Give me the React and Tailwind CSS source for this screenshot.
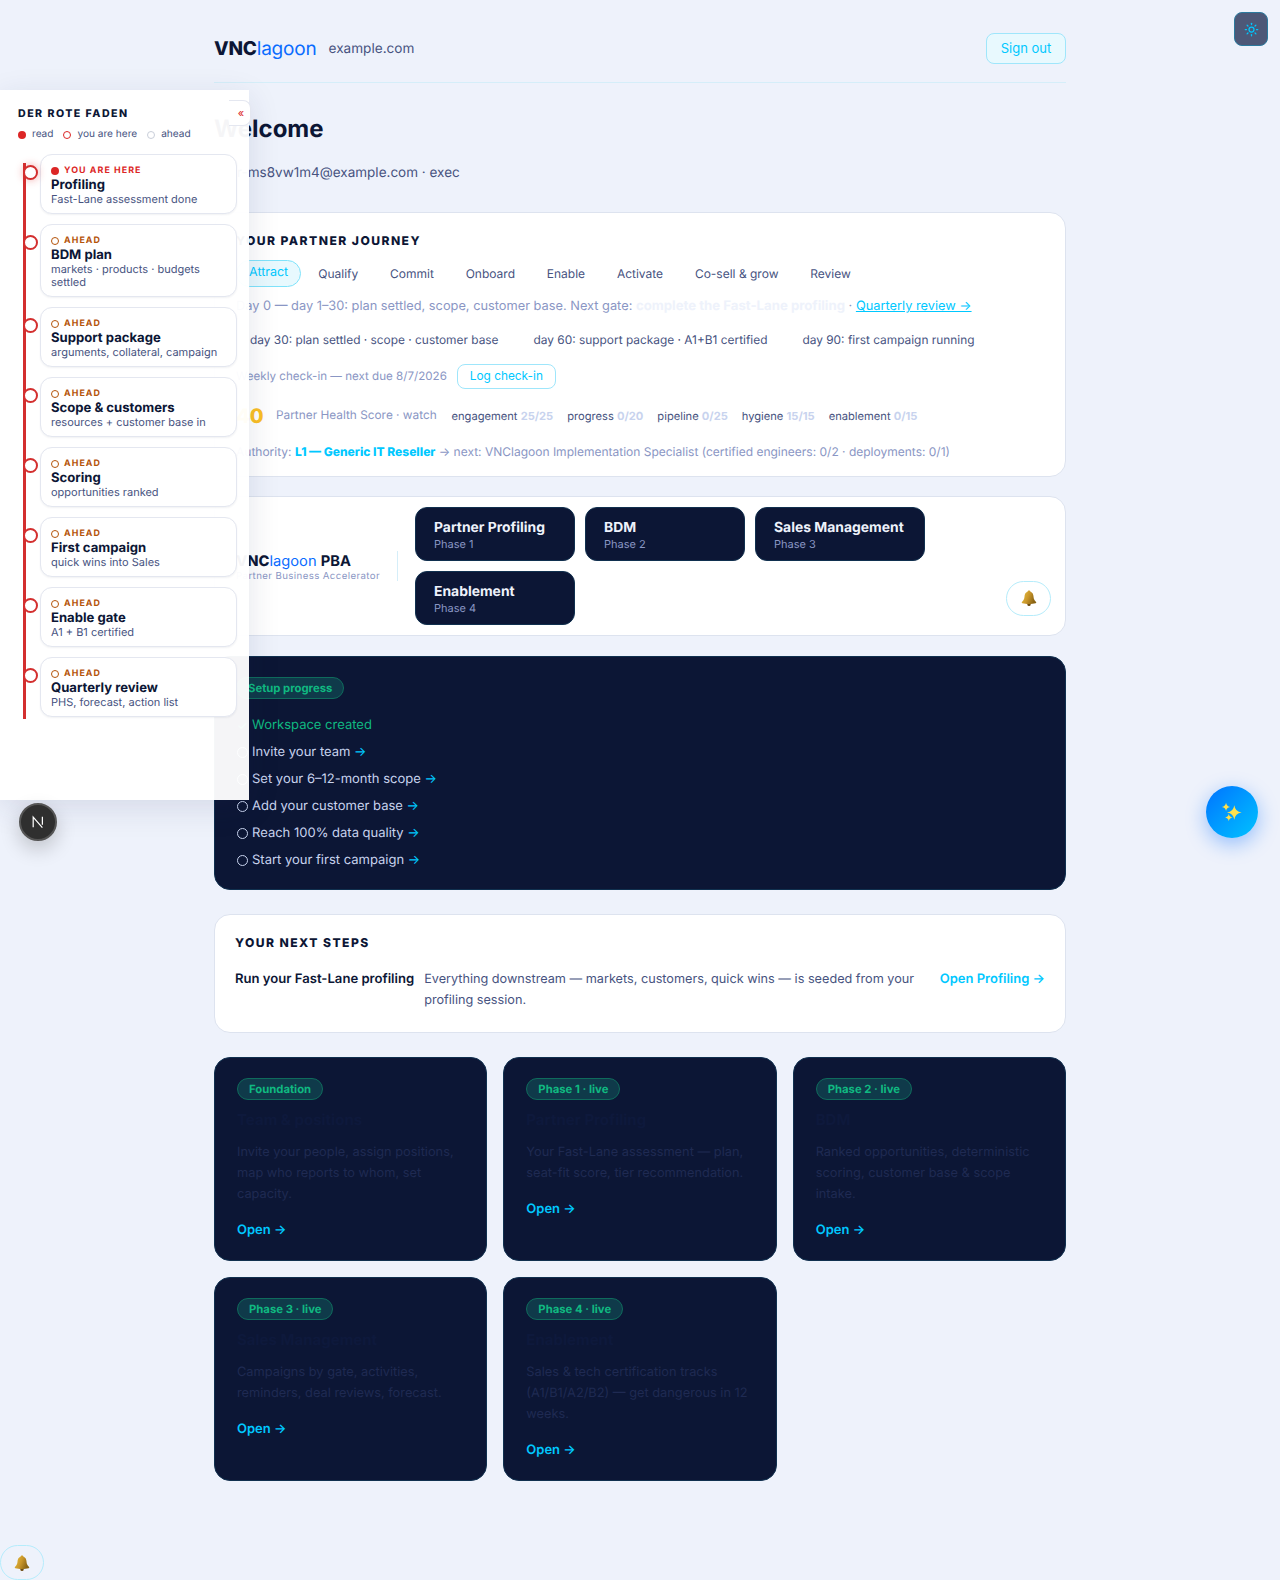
import { Sun } from 'lucide-react'

const rail = [
  { state: 'here', title: 'Profiling', desc: 'Fast-Lane assessment done' },
  { state: 'ahead', title: 'BDM plan', desc: 'markets · products · budgets settled' },
  { state: 'ahead', title: 'Support package', desc: 'arguments, collateral, campaign' },
  { state: 'ahead', title: 'Scope & customers', desc: 'resources + customer base in' },
  { state: 'ahead', title: 'Scoring', desc: 'opportunities ranked' },
  { state: 'ahead', title: 'First campaign', desc: 'quick wins into Sales' },
  { state: 'ahead', title: 'Enable gate', desc: 'A1 + B1 certified' },
  { state: 'ahead', title: 'Quarterly review', desc: 'PHS, forecast, action list' },
]

const tabs = ['Qualify', 'Commit', 'Onboard', 'Enable', 'Activate', 'Co-sell & grow', 'Review']

const scores = [
  ['engagement', '25/25'],
  ['progress', '0/20'],
  ['pipeline', '0/25'],
  ['hygiene', '15/15'],
  ['enablement', '0/15'],
]

const phases = [
  ['Partner Profiling', 'Phase 1', 'w-[160px]'],
  ['BDM', 'Phase 2', 'w-[160px]'],
  ['Sales Management', 'Phase 3', 'w-[170px]'],
  ['Enablement', 'Phase 4', 'w-[160px]'],
]

const setup = ['Invite your team', 'Set your 6–12-month scope', 'Add your customer base', 'Reach 100% data quality', 'Start your first campaign']

const cards = [
  ['Foundation', 'Team & positions', 'Invite your people, assign positions, map who reports to whom, set capacity.'],
  ['Phase 1 · live', 'Partner Profiling', 'Your Fast-Lane assessment — plan, seat-fit score, tier recommendation.'],
  ['Phase 2 · live', 'BDM', 'Ranked opportunities, deterministic scoring, customer base & scope intake.'],
  ['Phase 3 · live', 'Sales Management', 'Campaigns by gate, activities, reminders, deal reviews, forecast.'],
  ['Phase 4 · live', 'Enablement', 'Sales & tech certification tracks (A1/B1/A2/B2) — get dangerous in 12 weeks.'],
]

function Bell({ className }) {
  return (
    <svg viewBox="0 0 24 24" className={className}>
      <defs>
        <linearGradient id="bell-gold" x1="0" y1="0" x2="1" y2="0.4">
          <stop offset="0" stopColor="#e9c33f" />
          <stop offset="0.55" stopColor="#c9962a" />
          <stop offset="1" stopColor="#8a6414" />
        </linearGradient>
      </defs>
      <circle cx="12" cy="20.5" r="2.2" fill="#6d4c10" />
      <path d="M12 2c1.2 0 2 .8 2 1.8 2.8 1 3.8 3.4 4 6.2.2 3.2 1.2 5.2 3.4 7.4.5.6.2 1.4-.6 1.6-2.4.6-5.6.9-8.8.9s-6.4-.3-8.8-.9c-.8-.2-1.1-1-.6-1.6C4.8 15.2 5.8 13.2 6 10c.2-2.8 1.2-5.2 4-6.2C10 2.8 10.8 2 12 2z" fill="url(#bell-gold)" />
    </svg>
  )
}

function Sparkles({ className }) {
  const star = (x, y, r) => `M${x} ${y - r}Q${x + r * 0.12} ${y - r * 0.12} ${x + r} ${y}Q${x + r * 0.12} ${y + r * 0.12} ${x} ${y + r}Q${x - r * 0.12} ${y + r * 0.12} ${x - r} ${y}Q${x - r * 0.12} ${y - r * 0.12} ${x} ${y - r}z`
  return (
    <svg viewBox="0 0 24 24" className={className} fill="#ffe14d">
      <path d={star(14.5, 12.5, 8)} />
      <path d={star(5.5, 6.5, 4.5)} />
      <path d={star(8.5, 18, 4)} />
    </svg>
  )
}

function Sidebar() {
  return (
    <aside className="absolute left-0 top-[90px] h-[710px] w-[249px] bg-white/[0.96] pl-[18px] pr-[12px] pt-[17px] shadow-[0_8px_30px_rgba(30,45,90,0.12)]">
      <button className="absolute -right-[2px] top-[10px] flex h-[26px] w-[22px] items-center justify-center rounded-r-lg border border-l-0 border-[#e4e7f0] bg-white pl-[3px] text-[11px] leading-none text-[#dc2626]">«</button>
      <h2 className="text-[10.6px] leading-[13px] font-extrabold tracking-[0.14em] text-[#0c1635]">DER ROTE FADEN</h2>
      <div className="mt-[8px] flex items-center text-[10.1px] leading-[13px] text-[#47537f]">
        <span className="mr-[6px] h-2 w-2 rounded-full bg-[#dc2626]" />read
        <span className="ml-[10px] mr-[6px] h-2 w-2 rounded-full border border-[#dc2626] bg-white" />you are here
        <span className="ml-[10px] mr-[6px] h-2 w-2 rounded-full border border-[#c9ced9] bg-white" />ahead
      </div>
      <div className="relative mt-[13px]">
        <div className="absolute left-[5px] top-[9px] h-[556px] w-[3px] bg-[#d32f2f]" />
        <ul className="flex flex-col gap-[10px]">
          {rail.map((r) => (
            <li key={r.title} className="relative pl-[22px]">
              <span className={`absolute left-[5px] top-[11px] h-[15px] w-[15px] rounded-full border-2 border-[#d32f2f] bg-white ${r.state === 'here' ? 'shadow-[0_0_8px_rgba(220,38,38,0.4)]' : ''}`} />
              <div className="rounded-xl border border-[#e4e7f0] bg-white px-[10px] pb-[7px] pt-[10px] shadow-[0_1px_2px_rgba(20,30,70,0.06)]">
                <div className={`flex items-center gap-[5px] text-[8.9px] leading-[11px] font-bold tracking-[0.12em] ${r.state === 'here' ? 'text-[#dc2626]' : 'text-[#b45309]'}`}>
                  {r.state === 'here'
                    ? <span className="h-2 w-2 rounded-full bg-[#dc2626]" />
                    : <span className="h-2 w-2 rounded-full border border-[#b45309]" />}
                  {r.state === 'here' ? 'YOU ARE HERE' : 'AHEAD'}
                </div>
                <div className="mt-[0.5px] text-[13.1px] leading-[16px] font-bold text-[#0c1635]">{r.title}</div>
                <div className="mt-[0.5px] text-[11px] leading-[13px] text-[#47537f]">{r.desc}</div>
              </div>
            </li>
          ))}
        </ul>
      </div>
    </aside>
  )
}

function Pill({ children }) {
  return (
    <span className="inline-block rounded-full border border-[#0f6b5c] bg-[#0f3a4a] px-[11px] py-[3px] text-[11.3px] leading-[14px] font-bold text-[#10b981]">{children}</span>
  )
}

export default function App() {
  return (
    <div className="relative min-h-[1580px] bg-[#eef2fb] font-['Inter',sans-serif] text-[#0c1635] antialiased [text-rendering:geometricPrecision]">
      <main className="ml-[214px] w-[852px]">
        <header className="flex h-[83px] items-start justify-between border-b border-[#d5eef9] pt-[33px]">
          <div className="mt-px flex items-center gap-[12px]">
            <span className="text-[19px] leading-[30px] tracking-[-0.01em]"><b className="font-extrabold">VNC</b><span className="text-[#0a6cff]">lagoon</span></span>
            <span className="text-[13.6px] text-[#47537f]">example.com</span>
          </div>
          <button className="h-[31px] w-[80px] rounded-lg border border-[#9fe6fb] bg-[#e8f9fe] text-[13px] text-[#00c8ff]">Sign out</button>
        </header>

        <h1 className="mt-[30px] text-[24px] leading-[32px] font-bold">Welcome</h1>
        <p className="mt-[18px] text-[13.5px] leading-[20px] text-[#47537f]">user-ms8vw1m4@example.com · exec</p>

        <section className="mt-[29px] h-[265px] rounded-2xl border border-[#dde3ef] bg-white px-[21px] pt-[19px]">
          <h2 className="text-[12.1px] leading-[18px] font-extrabold tracking-[0.12em]">YOUR PARTNER JOURNEY</h2>
          <div className="mt-[10px] flex items-center text-[12px] text-[#47537f]">
            <span className="mr-[4px] flex h-[27px] items-center rounded-full border border-[#7fe3fb] bg-[#e8f9fe] px-[12px] text-[12.5px] text-[#00c8ff]">Attract</span>
            {tabs.map((t) => (
              <span key={t} className="mr-[5.8px] px-[13px]">{t}</span>
            ))}
          </div>
          <p className="mt-[9px] text-[12.8px] leading-[20px] text-[#8a96c4]">
            Day 0 — day 1–30: plan settled, scope, customer base. Next gate: <b className="text-[13.2px] font-bold text-[#eef2fb]">complete the Fast-Lane profiling</b> · <span className="text-[#00c8ff] underline">Quarterly review →</span>
          </p>
          <div className="mt-[13px] flex gap-[35px] pl-[14px] text-[11.9px] leading-[20px] text-[#47537f]">
            <span>day 30: plan settled · scope · customer base</span>
            <span>day 60: support package · A1+B1 certified</span>
            <span>day 90: first campaign running</span>
          </div>
          <div className="mt-[14px] flex items-center gap-[10px] text-[11.6px] text-[#8a96c4]">
            <span>Weekly check-in — next due 8/7/2026</span>
            <button className="h-[25px] w-[99px] rounded-lg border border-[#9fe6fb] bg-white text-[11.85px] text-[#00c8ff]">Log check-in</button>
          </div>
          <div className="mt-[13px] flex h-[28px] items-center">
            <span className="w-[40px] text-[20px] font-extrabold text-[#fbbf24]">40</span>
            <span className="w-[175.5px] text-[11.85px] text-[#8a96c4]">Partner Health Score · watch</span>
            <div className="flex gap-[14px] text-[11.15px] text-[#47537f]">
              {scores.map(([k, v]) => (
                <span key={k}>{k} <b className="font-bold text-[#c8d3ee]">{v}</b></span>
              ))}
            </div>
          </div>
          <p className="mt-[12px] text-[12px] leading-[20px] text-[#8a96c4]">
            Authority: <b className="font-extrabold text-[#00c8ff]">L1 — Generic IT Reseller</b> → next: VNClagoon Implementation Specialist (certified engineers: 0/2 · deployments: 0/1)
          </p>
        </section>

        <section className="mt-[19px] flex h-[140px] items-center rounded-2xl border border-[#dde3ef] bg-white pl-[21px] pr-[14px]">
          <div className="w-[161px] shrink-0 self-center pt-[2px]">
            <div className="text-[14.7px] leading-[20px] whitespace-nowrap"><b className="font-extrabold">VNC</b><span className="text-[#0a6cff]">lagoon</span> <b className="font-bold">PBA</b></div>
            <div className="text-[9.7px] leading-[12px] tracking-[0.04em] whitespace-nowrap text-[#8a96c4]">Partner Business Accelerator</div>
          </div>
          <div className="h-[30px] w-px bg-[#d5eef9]" />
          <nav className="ml-[17px] flex w-[520px] flex-wrap gap-[10px]">
            {phases.map(([t, p, w]) => (
              <div key={t} className={`${w} h-[54px] rounded-xl border border-[#10304f] bg-[#0c1635] px-[18px] pt-[11px]`}>
                <div className="text-[13.9px] leading-[18px] font-bold whitespace-nowrap text-[#eef2fb]">{t}</div>
                <div className="text-[11px] leading-[14px] text-[#8a96c4]">{p}</div>
              </div>
            ))}
          </nav>
          <button className="ml-auto mt-[64px] flex h-[35px] w-[45px] items-center justify-center rounded-full border border-[#b5ecfb] bg-white">
            <Bell className="h-[18px] w-[18px]" />
          </button>
        </section>

        <section className="mt-[20px] h-[234px] rounded-2xl border border-[#10304f] bg-[#0c1635] px-[21px] pt-[17px]">
          <Pill>Setup progress</Pill>
          <ul className="mt-[13px] flex flex-col text-[13px] leading-[27px]">
            <li className="flex items-center gap-[3px] text-[#10b981]"><span className="ml-px w-[12px] text-[12px]">✓</span>Workspace created</li>
            {setup.map((s) => (
              <li key={s} className="flex items-center gap-[4px] text-[#c8d3ee]">
                <span className="ml-[1px] h-[11px] w-[11px] rounded-full border-[1.5px] border-[#c8d3ee]" />
                <span>{s} <span className="text-[#00c8ff]">→</span></span>
              </li>
            ))}
          </ul>
        </section>

        <section className="mt-[24px] h-[119px] rounded-2xl border border-[#dde3ef] bg-white px-[20px] pt-[19px]">
          <h2 className="text-[12.1px] leading-[18px] font-extrabold tracking-[0.12em]">YOUR NEXT STEPS</h2>
          <div className="mt-[17px] flex items-start gap-[10px]">
            <b className="whitespace-nowrap text-[13.1px] leading-[21px] font-semibold">Run your Fast-Lane profiling</b>
            <p className="w-[500px] text-[12.68px] leading-[21px] text-[#47537f]">Everything downstream — markets, customers, quick wins — is seeded from your profiling session.</p>
            <span className="ml-auto whitespace-nowrap text-[13px] leading-[21px] font-semibold text-[#00c8ff]">Open Profiling →</span>
          </div>
        </section>

        <div className="mt-[24px] grid grid-cols-3 gap-x-[16px] gap-y-[16px]">
          {cards.map(([tag, title, desc]) => (
            <article key={tag} className="h-[204px] rounded-2xl border border-[#10304f] bg-[#0c1635] px-[22px] pt-[17px]">
              <Pill>{tag}</Pill>
              <h3 className="mt-[10px] text-[15px] leading-[20px] font-bold text-[#0e193c]">{title}</h3>
              <p className="mt-[12px] text-[12.8px] leading-[21px] text-[#1f2a52]">{desc}</p>
              <div className="mt-[15px] text-[13px] leading-[21px] font-semibold text-[#00c8ff]">Open →</div>
            </article>
          ))}
        </div>
      </main>

      <Sidebar />

      <button className="absolute left-[1234px] top-[12px] flex h-[34px] w-[34px] items-center justify-center rounded-lg border border-[#2b7a9e] bg-[#4d5877] text-[#00c8ff]">
        <Sun size={15} strokeWidth={2} />
      </button>
      <button className="absolute left-[1206px] top-[786px] flex h-[52px] w-[52px] items-center justify-center rounded-full bg-gradient-to-br from-[#0a72ff] to-[#00c2ff] shadow-[0_6px_20px_rgba(10,110,255,0.4)]">
        <Sparkles className="h-[22px] w-[22px]" />
      </button>
      <div className="absolute left-[19px] top-[803px] flex h-[38px] w-[38px] items-center justify-center rounded-full border-2 border-[#555] bg-[#2f2f2f] shadow-[0_8px_20px_rgba(0,0,0,0.2)]">
        <svg viewBox="0 0 16 16" className="h-[14px] w-[14px]" fill="none" stroke="#fff" strokeWidth="1.4">
          <path d="M2.5 14V2.5L13 14.5M13 2v9" />
        </svg>
      </div>
      <button className="absolute left-0 top-[1545px] flex h-[35px] w-[44px] items-center justify-center rounded-full border border-[#b5ecfb] bg-[#eef2fb]">
        <Bell className="h-[18px] w-[18px]" />
      </button>
    </div>
  )
}
